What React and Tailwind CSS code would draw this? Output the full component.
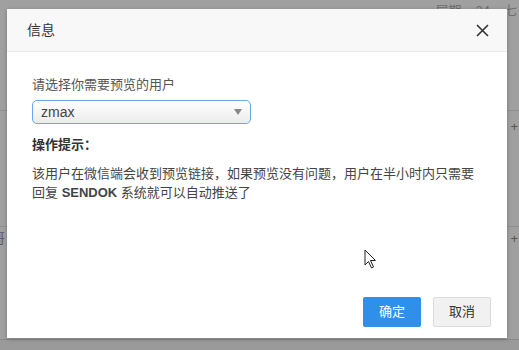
import React from "react";

const cjk = { fontFamily: '"Liberation Sans", "Noto Sans CJK SC", sans-serif' };

const Cursor = () => (
  <svg width="14" height="20" viewBox="0 0 14 20" className="absolute left-[364px] top-[249px]">
    <path d="M1 1 L1 16 L4.5 12.5 L7.5 19 L9.5 18 L6.5 11.5 L11.5 11.5 Z" fill="#fff" stroke="#222" strokeWidth="1" strokeLinejoin="round" />
  </svg>
);

const App = () => {
  return (
    <div className="relative h-[350px] w-[519px] overflow-hidden bg-[#a0a0a0]" style={cjk}>
      {/* page behind the overlay */}
      <div className="flex h-full flex-col text-[13px] text-[#6f6f6f]">
        <div className="flex h-[20px] items-start justify-end gap-[14px] pr-[2px] pt-[1px]">
          <span>层期</span>
          <span>24</span>
          <span>七</span>
        </div>
        <div className="h-[91px] border-b border-[#8f8f8f]" />
        <div className="flex h-[116px] items-start justify-end border-b border-[#8f8f8f] pr-[1px] pt-[6px] text-[#555]">
          +
        </div>
        <div className="flex h-[112px] items-start justify-between pt-[2px] text-[#555]">
          <span className="-ml-[8px]">哥</span>
          <span className="pr-[1px]">+</span>
        </div>
        <div className="flex-1 border-t border-[#8a8a8a] bg-[#9a9a9a]" />
      </div>

      {/* dialog */}
      <div className="absolute left-[7px] top-[9px] flex h-[329px] w-[500px] flex-col bg-white shadow-[0_1px_4px_rgba(0,0,0,0.25)]">
        <div className="flex h-[43px] items-center justify-between border-b border-[#e8e8e8] bg-[#f8f8f8] pl-[20px] pr-[18px]">
          <span className="text-[14px] text-[#333]">信息</span>
          <svg width="13" height="13" viewBox="0 0 13 13">
            <path d="M1 1 L12 12 M12 1 L1 12" stroke="#333" strokeWidth="1.6" />
          </svg>
        </div>

        <div className="flex flex-1 flex-col px-[25px] pt-[24px]">
          <div className="text-[13px] leading-[18px] text-[#555]">请选择你需要预览的用户</div>
          <div className="mt-[6px] flex h-[24px] w-[219px] items-center justify-between rounded-[5px] border border-[#6aa6ec] bg-gradient-to-b from-white to-[#ececec] pl-[8px] pr-[8px]">
            <span className="text-[14px] text-[#444]">zmax</span>
            <svg width="8" height="6" viewBox="0 0 8 6">
              <path d="M0 0 L8 0 L4 6 Z" fill="#888" />
            </svg>
          </div>
          <div className="mt-[12px] text-[13px] font-bold leading-[18px] text-[#333]">操作提示：</div>
          <p className="mt-[10px] w-[445px] text-[13px] leading-[19px] text-[#444]">
            该用户在微信端会收到预览链接，如果预览没有问题，用户在半小时内只需要回复 <span className="font-bold">SENDOK</span> 系统就可以自动推送了
          </p>

          <div className="-mr-[9px] mt-auto flex justify-end gap-[12px] pb-[11px]">
            <button className="h-[30px] w-[58px] rounded-[2px] bg-[#2f8fe9] text-[13px] text-white">确定</button>
            <button className="h-[30px] w-[58px] rounded-[2px] border border-[#dcdcdc] bg-[#f1f1f1] text-[13px] text-[#333]">取消</button>
          </div>
        </div>
      </div>

      <Cursor />
    </div>
  );
};

export default App;
